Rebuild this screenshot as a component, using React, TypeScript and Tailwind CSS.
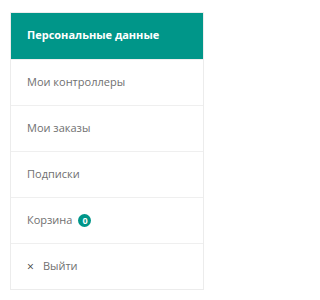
const items = ["Мои контроллеры", "Мои заказы", "Подписки"];

export default function App() {
  return (
    <div className="bg-white w-[214px] h-[300px] pt-3 px-[10px]" style={{ fontFamily: '"Open Sans", sans-serif' }}>
      <div className="border border-[#ececec] w-[194px]">
        {/* Active item */}
        <div className="bg-[#009689] h-[46px] flex items-center pl-4 pb-[2px] text-[11px] font-bold text-white">
          Персональные данные
        </div>
        {items.map((label) => (
          <div key={label} className="h-[46px] flex items-center pl-4 text-[11px] text-[#707070] border-t border-[#efefef]">
            {label}
          </div>
        ))}
        <div className="h-[46px] flex items-center pl-4 text-[11px] text-[#707070] border-t border-[#efefef]">
          Корзина
          <span className="ml-[6px] w-[13px] h-[13px] rounded-full bg-[#009689] text-white text-[9px] font-bold flex items-center justify-center">
            0
          </span>
        </div>
        <div className="h-[46px] flex items-center pl-4 text-[11px] text-[#707070] border-t border-[#efefef]">
          <span className="text-[12px] text-[#444] mr-[9px]">×</span>
          Выйти
        </div>
      </div>
    </div>
  );
}
